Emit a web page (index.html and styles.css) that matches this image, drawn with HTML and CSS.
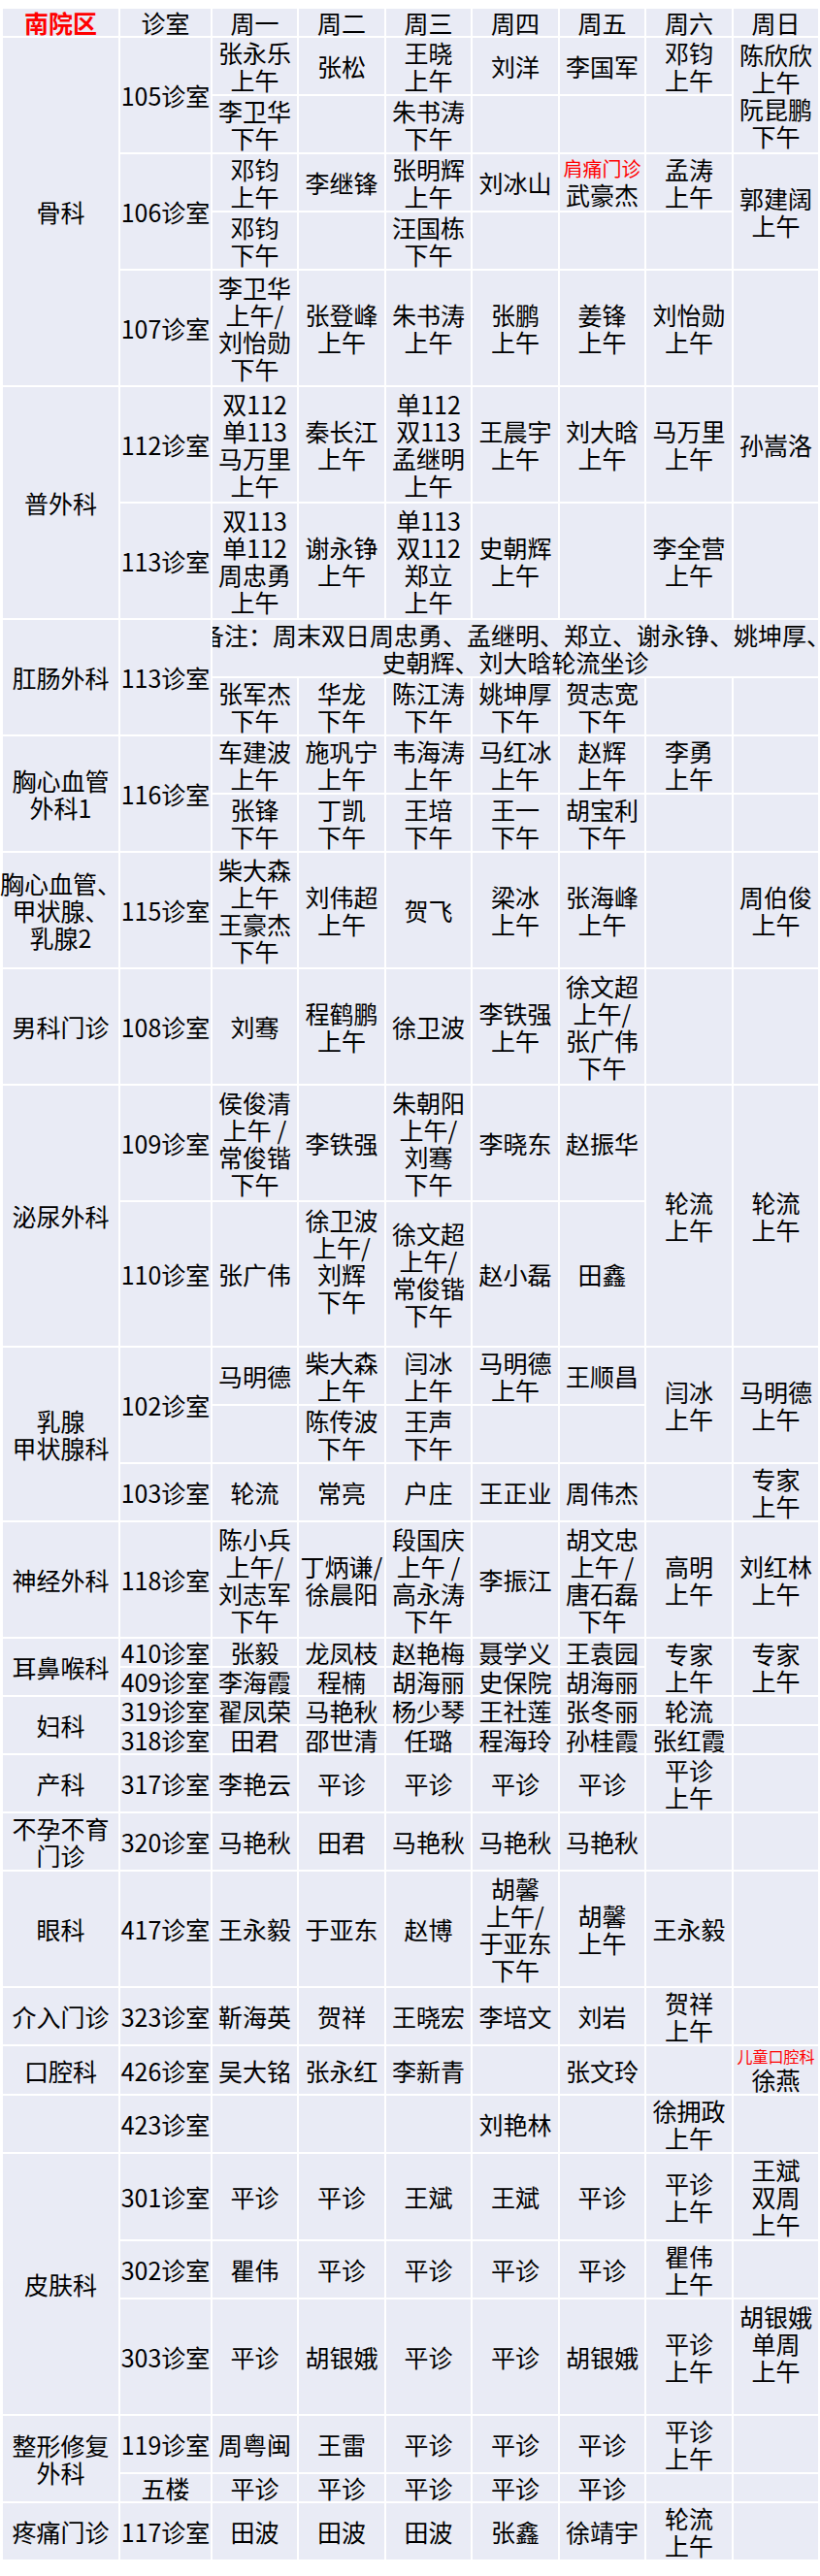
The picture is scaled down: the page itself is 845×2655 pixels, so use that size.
FILE: index.html
```html
<!DOCTYPE html>
<html lang="zh-CN">
<head>
<meta charset="utf-8">
<title>南院区门诊排班表</title>
<link rel="stylesheet" href="styles.css">
</head>
<body>
<table class="sched">
<colgroup>
<col class="c-dept"><col class="c-room">
<col class="c-d1"><col class="c-d2"><col class="c-d1"><col class="c-d2"><col class="c-d1"><col class="c-d2"><col class="c-d1">
</colgroup>
<tbody>
<tr class="h28"><td class="zone">南院区</td><td>诊室</td><td>周一</td><td>周二</td><td>周三</td><td>周四</td><td>周五</td><td>周六</td><td>周日</td></tr>

<tr class="h58"><td rowspan="5">骨科</td><td rowspan="2">105诊室</td><td>张永乐<br>上午</td><td>张松</td><td>王晓<br>上午</td><td>刘洋</td><td>李国军</td><td>邓钧<br>上午</td><td rowspan="2">陈欣欣<br>上午<br>阮昆鹏<br>下午</td></tr>
<tr class="h58"><td>李卫华<br>下午</td><td></td><td>朱书涛<br>下午</td><td></td><td></td><td></td></tr>
<tr class="h58"><td rowspan="2">106诊室</td><td>邓钧<br>上午</td><td>李继锋</td><td>张明辉<br>上午</td><td>刘冰山</td><td><span class="tag">肩痛门诊</span>武豪杰</td><td>孟涛<br>上午</td><td rowspan="2">郭建阔<br>上午</td></tr>
<tr class="h58"><td>邓钧<br>下午</td><td></td><td>汪国栋<br>下午</td><td></td><td></td><td></td></tr>
<tr class="h118"><td>107诊室</td><td>李卫华<br>上午/<br>刘怡勋<br>下午</td><td>张登峰<br>上午</td><td>朱书涛<br>上午</td><td>张鹏<br>上午</td><td>姜锋<br>上午</td><td>刘怡勋<br>上午</td><td></td></tr>

<tr class="h118"><td rowspan="2">普外科</td><td>112诊室</td><td>双112<br>单113<br>马万里<br>上午</td><td>秦长江<br>上午</td><td>单112<br>双113<br>孟继明<br>上午</td><td>王晨宇<br>上午</td><td>刘大晗<br>上午</td><td>马万里<br>上午</td><td>孙嵩洛</td></tr>
<tr class="h118"><td>113诊室</td><td>双113<br>单112<br>周忠勇<br>上午</td><td>谢永铮<br>上午</td><td>单113<br>双112<br>郑立<br>上午</td><td>史朝辉<br>上午</td><td></td><td>李全营<br>上午</td><td></td></tr>

<tr class="h58"><td rowspan="2">肛肠外科</td><td rowspan="2">113诊室</td><td colspan="7" class="note"><div class="note-in"><span>备注：周末双日周忠勇、孟继明、郑立、谢永铮、姚坤厚、</span><span>史朝辉、刘大晗轮流坐诊</span></div></td></tr>
<tr class="h58"><td>张军杰<br>下午</td><td>华龙<br>下午</td><td>陈江涛<br>下午</td><td>姚坤厚<br>下午</td><td>贺志宽<br>下午</td><td></td><td></td></tr>

<tr class="h58"><td rowspan="2">胸心血管<br>外科1</td><td rowspan="2">116诊室</td><td>车建波<br>上午</td><td>施巩宁<br>上午</td><td>韦海涛<br>上午</td><td>马红冰<br>上午</td><td>赵辉<br>上午</td><td>李勇<br>上午</td><td></td></tr>
<tr class="h58"><td>张锋<br>下午</td><td>丁凯<br>下午</td><td>王培<br>下午</td><td>王一<br>下午</td><td>胡宝利<br>下午</td><td></td><td></td></tr>

<tr class="h118"><td><div class="wide">胸心血管、<br>甲状腺、<br>乳腺2</div></td><td>115诊室</td><td>柴大森<br>上午<br>王豪杰<br>下午</td><td>刘伟超<br>上午</td><td>贺飞</td><td>梁冰<br>上午</td><td>张海峰<br>上午</td><td></td><td>周伯俊<br>上午</td></tr>

<tr class="h118"><td>男科门诊</td><td>108诊室</td><td>刘骞</td><td>程鹤鹏<br>上午</td><td>徐卫波</td><td>李铁强<br>上午</td><td>徐文超<br>上午/<br>张广伟<br>下午</td><td></td><td></td></tr>

<tr class="h118"><td rowspan="2">泌尿外科</td><td>109诊室</td><td>侯俊清<br>上午 /<br>常俊锴<br>下午</td><td>李铁强</td><td>朱朝阳<br>上午/<br>刘骞<br>下午</td><td>李晓东</td><td>赵振华</td><td rowspan="2">轮流<br>上午</td><td rowspan="2">轮流<br>上午</td></tr>
<tr class="h148"><td>110诊室</td><td>张广伟</td><td>徐卫波<br>上午/<br>刘辉<br>下午<br>&nbsp;</td><td>徐文超<br>上午/<br>常俊锴<br>下午</td><td>赵小磊</td><td>田鑫</td></tr>

<tr class="h58"><td rowspan="3">乳腺<br>甲状腺科</td><td rowspan="2">102诊室</td><td>马明德</td><td>柴大森<br>上午</td><td>闫冰<br>上午</td><td>马明德<br>上午</td><td>王顺昌</td><td rowspan="2">闫冰<br>上午</td><td rowspan="2">马明德<br>上午</td></tr>
<tr class="h58"><td></td><td>陈传波<br>下午</td><td>王声<br>下午</td><td></td><td></td></tr>
<tr class="h58"><td>103诊室</td><td>轮流</td><td>常亮</td><td>户庄</td><td>王正业</td><td>周伟杰</td><td></td><td>专家<br>上午</td></tr>

<tr class="h118"><td>神经外科</td><td>118诊室</td><td>陈小兵<br>上午/<br>刘志军<br>下午</td><td>丁炳谦/<br>徐晨阳</td><td>段国庆<br>上午 /<br>高永涛<br>下午</td><td>李振江</td><td>胡文忠<br>上午 /<br>唐石磊<br>下午</td><td>高明<br>上午</td><td>刘红林<br>上午</td></tr>

<tr class="h28"><td rowspan="2">耳鼻喉科</td><td>410诊室</td><td>张毅</td><td>龙凤枝</td><td>赵艳梅</td><td>聂学义</td><td>王袁园</td><td rowspan="2">专家<br>上午</td><td rowspan="2">专家<br>上午</td></tr>
<tr class="h28"><td>409诊室</td><td>李海霞</td><td>程楠</td><td>胡海丽</td><td>史保院</td><td>胡海丽</td></tr>

<tr class="h28"><td rowspan="2">妇科</td><td>319诊室</td><td>翟凤荣</td><td>马艳秋</td><td>杨少琴</td><td>王社莲</td><td>张冬丽</td><td>轮流</td><td></td></tr>
<tr class="h28"><td>318诊室</td><td>田君</td><td>邵世清</td><td>任璐</td><td>程海玲</td><td>孙桂霞</td><td>张红霞</td><td></td></tr>

<tr class="h58"><td>产科</td><td>317诊室</td><td>李艳云</td><td>平诊</td><td>平诊</td><td>平诊</td><td>平诊</td><td>平诊<br>上午</td><td></td></tr>
<tr class="h58"><td>不孕不育<br>门诊</td><td>320诊室</td><td>马艳秋</td><td>田君</td><td>马艳秋</td><td>马艳秋</td><td>马艳秋</td><td></td><td></td></tr>
<tr class="h118"><td>眼科</td><td>417诊室</td><td>王永毅</td><td>于亚东</td><td>赵博</td><td>胡馨<br>上午/<br>于亚东<br>下午</td><td>胡馨<br>上午</td><td>王永毅</td><td></td></tr>
<tr class="h58"><td>介入门诊</td><td>323诊室</td><td>靳海英</td><td>贺祥</td><td>王晓宏</td><td>李培文</td><td>刘岩</td><td>贺祥<br>上午</td><td></td></tr>

<tr class="h49"><td>口腔科</td><td>426诊室</td><td>吴大铭</td><td>张永红</td><td>李新青</td><td></td><td>张文玲</td><td></td><td><span class="tag-s">儿童口腔科</span>徐燕</td></tr>
<tr class="h58"><td></td><td>423诊室</td><td></td><td></td><td></td><td>刘艳林</td><td></td><td>徐拥政<br>上午</td><td></td></tr>

<tr class="h88"><td rowspan="3">皮肤科</td><td>301诊室</td><td>平诊</td><td>平诊</td><td>王斌</td><td>王斌</td><td>平诊</td><td>平诊<br>上午</td><td>王斌<br>双周<br>上午</td></tr>
<tr class="h58"><td>302诊室</td><td>瞿伟</td><td>平诊</td><td>平诊</td><td>平诊</td><td>平诊</td><td>瞿伟<br>上午</td><td></td></tr>
<tr class="h118"><td>303诊室</td><td>平诊</td><td>胡银娥</td><td>平诊</td><td>平诊</td><td>胡银娥</td><td>平诊<br>上午</td><td>胡银娥<br>单周<br>上午<br>&nbsp;</td></tr>

<tr class="h58"><td rowspan="2">整形修复<br>外科</td><td>119诊室</td><td>周粤闽</td><td>王雷</td><td>平诊</td><td>平诊</td><td>平诊</td><td>平诊<br>上午</td><td></td></tr>
<tr class="h28"><td>五楼</td><td>平诊</td><td>平诊</td><td>平诊</td><td>平诊</td><td>平诊</td><td></td><td></td></tr>

<tr class="h58"><td>疼痛门诊</td><td>117诊室</td><td>田波</td><td>田波</td><td>田波</td><td>张鑫</td><td>徐靖宇</td><td>轮流<br>上午</td><td></td></tr>
</tbody>
</table>
</body>
</html>
```

FILE: styles.css
```css
html, body {
  margin: 0;
  padding: 0;
  background: #ffffff;
}

body {
  font-family: "Noto Sans CJK SC", "Noto Sans", sans-serif;
  color: #000000;
}

.sched {
  margin: 7px 0 0 1px;
  width: 844px;
  table-layout: fixed;
  border-collapse: separate;
  border-spacing: 2px;
  background: #ffffff;
}

.c-dept { width: 119px; }
.c-room { width: 93px; }
.c-d1 { width: 87px; }
.c-d2 { width: 88px; }

.sched td {
  padding: 0;
  background: #e9ebf5;
  text-align: center;
  vertical-align: middle;
  font-size: 25px;
  line-height: 28px;
  font-weight: 400;
  white-space: nowrap;
  overflow: visible;
}

.h28 { height: 28px; }
.h49 { height: 49px; }
.h58 { height: 58px; }
.h88 { height: 88px; }
.h118 { height: 118px; }
.h148 { height: 148px; }

.sched td.zone {
  color: #ff0000;
  font-weight: 700;
}

.tag {
  display: block;
  color: #ff0000;
  font-size: 20px;
  line-height: 24px;
}

.tag-s {
  display: block;
  color: #ff0000;
  font-size: 16px;
  line-height: 19px;
}

.wide {
  margin: 0 -4px;
}

.sched td.note {
  overflow: hidden;
}

.note-in {
  display: flex;
  flex-direction: column;
  align-items: center;
  overflow: hidden;
}

.note-in span {
  white-space: nowrap;
}
```
